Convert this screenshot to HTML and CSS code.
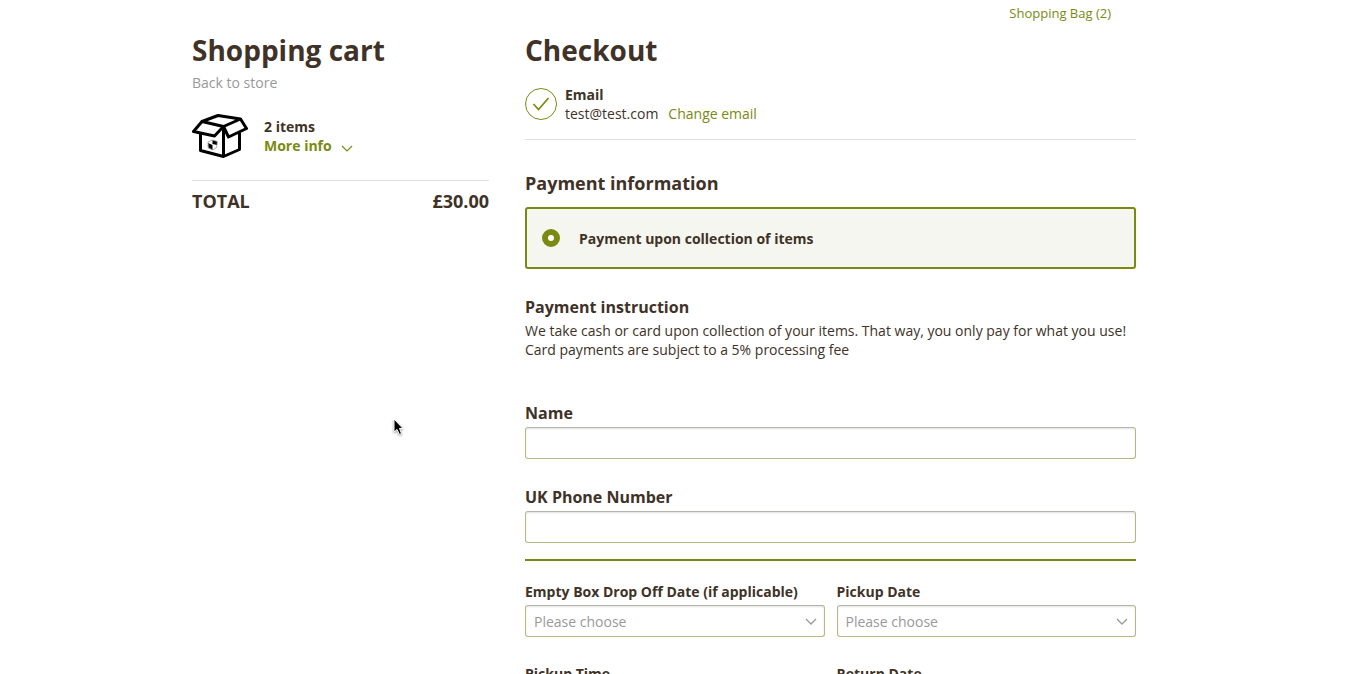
FILE: index.html
```html
<!DOCTYPE html>
<html lang="en">
<head>
  <meta charset="UTF-8" />
  <meta name="viewport" content="width=device-width, initial-scale=1.0" />
  <title>Checkout</title>
  <link rel="stylesheet" href="styles.css">
</head>
<body>
  <div class="page">
    <header class="topbar">
      <a href="#">Shopping Bag (2)</a>
    </header>

    <main class="columns">
      <section class="cart">
        <h1>Shopping cart</h1>
        <a class="back" href="#">Back to store</a>

        <div class="cart-item">
          <svg class="box-icon" viewBox="0 0 56 48" fill="none" stroke="#000" stroke-width="3" stroke-linejoin="round">
            <path d="M8.500 22V38.500L31.500 44.500L47.500 37.500V21" />
            <path d="M31.500 16V44.500" />
            <path d="M10 9.500L26 3.500L48.500 7L31.500 14.500Z" />
            <path d="M10 9.500L1.500 19.500L22.500 24L31.500 14.500L36.500 25L54.500 16.500L48.500 7" />
            <path d="M20.500 28L25 29.500V33L20.500 32Z" fill="#000" stroke="none" />
            <path d="M16 31L20.500 33V38L16.500 36Z" fill="#000" stroke="none" />
            <path d="M16 30L20.500 28L25.500 29.500L24.500 35.500L20.500 38L16 35.500Z" stroke="#999" stroke-width="0.800" />
          </svg>
          <div class="cart-text">
            <strong>2 items</strong>
            <a class="more" href="#">More info
              <svg viewBox="0 0 12 8" width="12" height="8" fill="none" stroke="currentColor" stroke-width="1.200"><path d="M1 1L6 6L11 1" /></svg>
            </a>
          </div>
        </div>

        <div class="total">
          <span>TOTAL</span>
          <span>£30.00</span>
        </div>
      </section>

      <section class="checkout">
        <h1>Checkout</h1>

        <div class="email">
          <svg class="check" viewBox="0 0 32 32" width="32" height="32" fill="none" stroke="currentColor">
            <circle cx="16" cy="16" r="15.5" />
            <path d="M8.500 16L13.500 21.500L23.500 10" stroke-width="1.700" />
          </svg>
          <div>
            <strong>Email</strong>
            <div class="address">
              <span>test@test.com</span>
              <a href="#">Change email</a>
            </div>
          </div>
        </div>

        <h2>Payment information</h2>
        <label class="method" for="collection">
          <input type="radio" id="collection" name="payment" checked>
          <span>Payment upon collection of items</span>
        </label>

        <div class="instruction">
          <h3>Payment instruction</h3>
          <p>We take cash or card upon collection of your items. That way, you only pay for what you use!<br>Card payments are subject to a 5% processing fee</p>
        </div>

        <form>
          <div class="field">
            <label for="name">Name</label>
            <input type="text" id="name">
          </div>
          <div class="field">
            <label for="phone">UK Phone Number</label>
            <input type="tel" id="phone">
          </div>

          <div class="dates">
            <div class="choice">
              <label for="dropoff">Empty Box Drop Off Date (if applicable)</label>
              <div class="select">
                <select id="dropoff"><option>Please choose</option></select>
                <svg viewBox="0 0 12 8" width="12" height="8" fill="none" stroke="currentColor" stroke-width="1.300"><path d="M1 1L6 6L11 1" /></svg>
              </div>
            </div>
            <div class="choice">
              <label for="pickup">Pickup Date</label>
              <div class="select">
                <select id="pickup"><option>Please choose</option></select>
                <svg viewBox="0 0 12 8" width="12" height="8" fill="none" stroke="currentColor" stroke-width="1.300"><path d="M1 1L6 6L11 1" /></svg>
              </div>
            </div>
            <div class="choice">
              <label for="pickup-time">Pickup Time</label>
              <div class="select">
                <select id="pickup-time"><option>Please choose</option></select>
                <svg viewBox="0 0 12 8" width="12" height="8" fill="none" stroke="currentColor" stroke-width="1.300"><path d="M1 1L6 6L11 1" /></svg>
              </div>
            </div>
            <div class="choice">
              <label for="return">Return Date</label>
              <div class="select">
                <select id="return"><option>Please choose</option></select>
                <svg viewBox="0 0 12 8" width="12" height="8" fill="none" stroke="currentColor" stroke-width="1.300"><path d="M1 1L6 6L11 1" /></svg>
              </div>
            </div>
          </div>
        </form>
      </section>
    </main>
  </div>

  <svg class="pointer" viewBox="0 0 12 18" width="12" height="18">
    <path d="M1 1V14L4 11.500L6.500 16.500L8.500 15.500L6.500 10.500H10Z" fill="#000" stroke="#fff" stroke-width="1" />
  </svg>
</body>
</html>
```
FILE: styles.css
```css
* {
  box-sizing: border-box;
}

body {
  margin: 0;
  background: #fff;
  color: #403227;
  font-family: "Open Sans", sans-serif;
  font-size: 14px;
  line-height: 19px;
}

h1, h2, h3, p {
  margin: 0;
}

a {
  color: #7a8a10;
  text-decoration: none;
}

.page {
  max-width: 961px;
  margin: 0 auto;
  padding-right: 17px;
}

.topbar {
  padding: 4px 25px 7px 0;
  text-align: right;
  font-size: 13px;
}

h1 {
  font-size: 28px;
  line-height: 40px;
}

.columns {
  display: grid;
  grid-template-columns: 297px 1fr;
  gap: 36px;
}

.cart .back {
  display: block;
  margin-top: 3px;
  color: #999;
}

.cart-item {
  display: flex;
  align-items: center;
  gap: 16px;
  padding: 20px 0;
  border-bottom: 1px solid #e2e2e2;
}

.box-icon {
  width: 56px;
  height: 48px;
}

.cart-text strong,
.more {
  display: block;
}

.more {
  font-weight: bold;
}

.more svg {
  margin-left: 6px;
  vertical-align: -2px;
}

.total {
  display: flex;
  justify-content: space-between;
  padding-top: 8px;
  font-size: 18px;
  font-weight: bold;
  line-height: 24px;
}

.email {
  display: flex;
  align-items: center;
  gap: 8px;
  padding: 15px 0 16px;
  border-bottom: 1px solid #e2e2e2;
}

.email strong {
  display: block;
}

.check {
  color: #7a8a10;
}

.address {
  display: flex;
  gap: 10px;
}

h2 {
  margin: 31px 0 12px;
  font-size: 18px;
  line-height: 24px;
}

.method {
  display: flex;
  align-items: center;
  gap: 19px;
  height: 62px;
  padding: 0 15px;
  border: 2px solid #7a8a10;
  border-radius: 3px;
  background: #f5f6f0;
  font-weight: bold;
}

.method input {
  appearance: none;
  width: 18px;
  height: 18px;
  margin: 0;
  border: 6px solid #7a8a10;
  border-radius: 50%;
  background: #fff;
}

.instruction {
  margin: 28px 0 44px;
}

h3 {
  margin-bottom: 4px;
  font-size: 16px;
  line-height: 20px;
}

.field {
  margin-bottom: 28px;
}

.field label {
  display: block;
  margin-bottom: 4px;
  font-size: 16px;
  font-weight: bold;
  line-height: 20px;
}

.field:nth-child(2) {
  margin-bottom: 16px;
}

.field input,
.select select {
  display: block;
  width: 100%;
  height: 32px;
  padding: 0 8px;
  border: 1px solid #b9b883;
  border-top-color: #b4b4a8;
  border-radius: 3px;
  background: #fff;
  box-shadow: inset 0 1px 2px rgba(0, 0, 0, 0.12);
  color: #999;
  font: inherit;
}

.select select {
  appearance: none;
}

.dates {
  display: grid;
  grid-template-columns: 1fr 1fr;
  gap: 27px 12px;
  padding-top: 21px;
  border-top: 2px solid #7a8a10;
}

.choice label {
  display: block;
  margin-bottom: 3px;
  font-weight: bold;
  line-height: 20px;
}

.select {
  position: relative;
}

/* chevron sits over the native select */
.select svg {
  position: absolute;
  top: 13px;
  right: 8px;
  color: #999;
  pointer-events: none;
}

.pointer {
  position: absolute;
  top: 418px;
  left: 393px;
  filter: drop-shadow(0 1px 1px rgba(0, 0, 0, 0.4));
}
```
